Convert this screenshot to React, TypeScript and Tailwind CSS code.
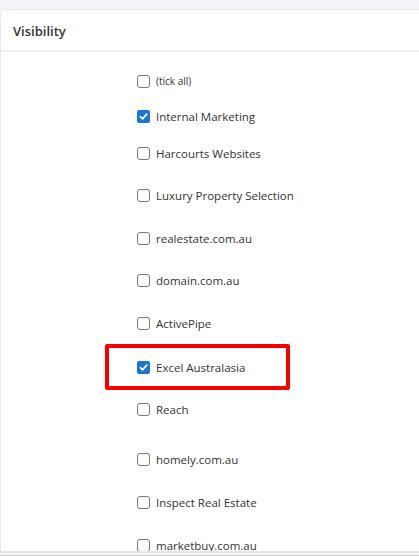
const items = [
  { label: "(tick all)", checked: false, small: true, mt: "mt-0" },
  { label: "Internal Marketing", checked: true, mt: "mt-[15px]" },
  { label: "Harcourts Websites", checked: false, mt: "mt-[17px]" },
  { label: "Luxury Property Selection", checked: false, mt: "mt-[22px]" },
  { label: "realestate.com.au", checked: false, mt: "mt-[23px]" },
  { label: "domain.com.au", checked: false, mt: "mt-[22px]" },
  { label: "ActivePipe", checked: false, mt: "mt-[23px]" },
  { label: "Excel Australasia", checked: true, mt: "mt-[24px]", highlight: true },
  { label: "Reach", checked: false, mt: "mt-[22px]" },
  { label: "homely.com.au", checked: false, mt: "mt-[30px]" },
  { label: "Inspect Real Estate", checked: false, mt: "mt-[23px]" },
  { label: "marketbuy.com.au", checked: false, mt: "mt-[23px]" },
];

const Box = ({ checked }: { checked: boolean }) =>
  checked ? (
    <span className="flex h-[13px] w-[13px] shrink-0 items-center justify-center rounded-[2px] bg-[#1c74d4]">
      <svg width="9" height="9" viewBox="0 0 10 10" fill="none">
        <path d="M1.5 5.2 L4 7.6 L8.6 2.4" stroke="white" strokeWidth="1.9" strokeLinecap="round" strokeLinejoin="round" />
      </svg>
    </span>
  ) : (
    <span className="h-[13px] w-[13px] shrink-0 rounded-[3px] border border-[#7a7a7a] bg-white" />
  );

export default function App() {
  return (
    <div className="h-[556px] overflow-hidden bg-[#f3f4f7] pt-[9px] font-['Open_Sans',sans-serif] text-[#333]">
      <div className="flex h-[542px] flex-col overflow-hidden rounded-tl-[5px] border-l border-t border-[#e6e8ec] bg-white">
        <div className="flex h-[42px] shrink-0 items-center border-b-2 border-[#eef0f2] pl-3 pt-[3px] text-[13px] font-semibold">
          Visibility
        </div>
        <div className="flex flex-col pl-[136px] pt-[19px]">
          {items.map((it) => (
            <div key={it.label} className={`relative flex h-5 items-center gap-[6px] ${it.mt}`}>
              <Box checked={it.checked} />
              <span className={it.small ? "text-[10px] leading-[13px]" : "text-[11.5px] leading-[13px]"}>
                {it.label}
              </span>
              {it.highlight && (
                <div className="absolute left-[-32px] top-[-13px] h-[46px] w-[185px] rounded-[2px] border-4 border-[#f80000]" />
              )}
            </div>
          ))}
        </div>
      </div>
      <div className="h-[2px] bg-[#e6e6e6]" />
      <div className="h-[2px] bg-[#f4f4f4]" />
      <div className="h-[1px] bg-[#cfcfcf]" />
    </div>
  );
}
